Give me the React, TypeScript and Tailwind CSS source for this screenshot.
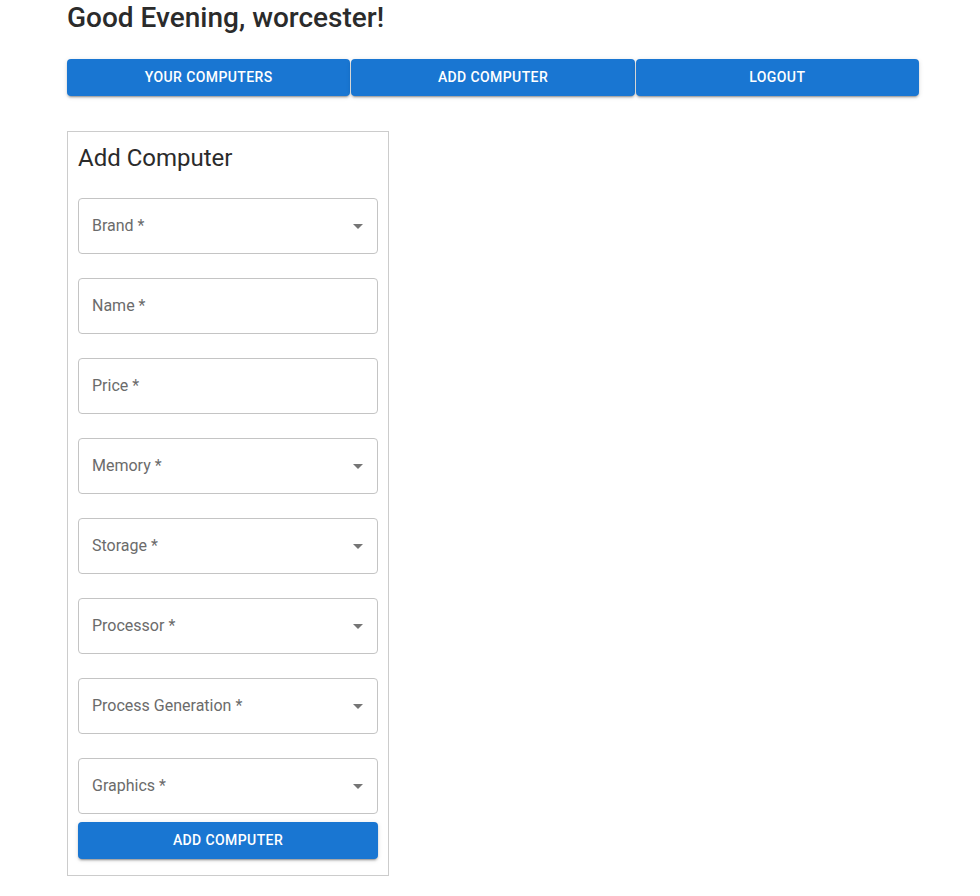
const fields = [
  { label: 'Brand', select: true },
  { label: 'Name', select: false },
  { label: 'Price', select: false },
  { label: 'Memory', select: true },
  { label: 'Storage', select: true },
  { label: 'Processor', select: true },
  { label: 'Process Generation', select: true },
  { label: 'Graphics', select: true },
];

const btn =
  'flex h-[37px] items-center justify-center rounded-[4px] bg-[#1976d2] text-[14px] font-medium tracking-[0.4px] text-white uppercase shadow-[0_3px_1px_-2px_rgba(0,0,0,0.2),0_2px_2px_0_rgba(0,0,0,0.14),0_1px_5px_0_rgba(0,0,0,0.12)]';

const Field = ({ label, select }: { label: string; select: boolean }) => (
  <div className="relative flex h-[56px] items-center rounded-[4px] border border-[#c4c4c4] px-[13px]">
    <span className="text-[16px] text-[#6b6b6b]">{label} *</span>
    {select && (
      <svg className="absolute right-[7px] h-[24px] w-[24px] fill-[#757575]" viewBox="0 0 24 24">
        <path d="M7 10l5 5 5-5z" />
      </svg>
    )}
  </div>
);

export default function App() {
  return (
    <div className="min-h-screen bg-white font-['Roboto',sans-serif] text-[#212121]">
      <div className="mx-[67px] w-[852px]">
        <h1 className="text-[28px] leading-[35px] font-medium text-[#2b2b2b]">Good Evening, worcester!</h1>

        {/* Nav buttons */}
        <div className="mt-[24px] grid grid-cols-3 gap-px">
          <button className={btn}>Your Computers</button>
          <button className={btn}>Add Computer</button>
          <button className={btn}>Logout</button>
        </div>

        {/* Form card */}
        <div className="mt-[35px] w-[322px] border border-[#cccccc] px-[10px] pt-[10px] pb-[16px]">
          <h2 className="text-[24px] leading-[32px] text-[#2b2b2b]">Add Computer</h2>
          <div className="mt-[24px] flex flex-col gap-[24px]">
            {fields.map((f) => (
              <Field key={f.label} label={f.label} select={f.select} />
            ))}
          </div>
          <button className={`${btn} mt-[8px] h-[36px] w-full`}>Add Computer</button>
        </div>
      </div>
    </div>
  );
}
